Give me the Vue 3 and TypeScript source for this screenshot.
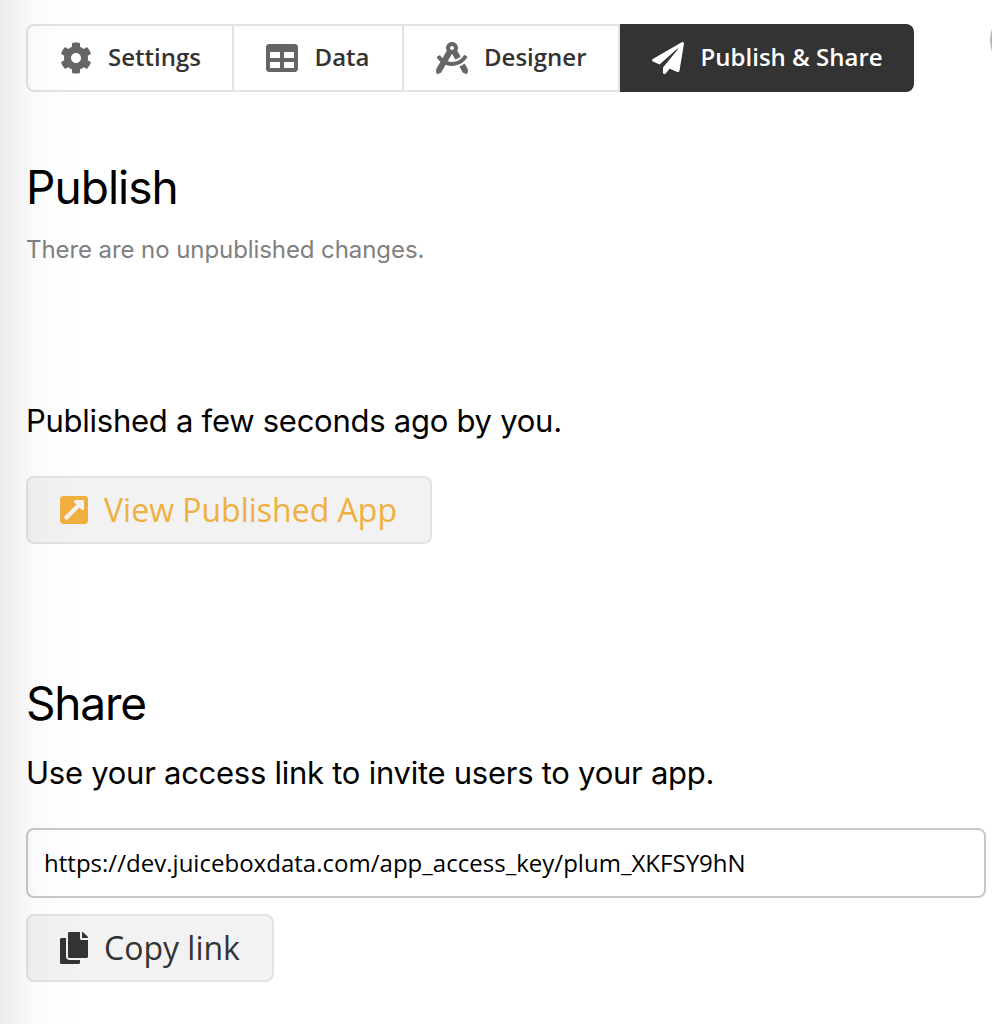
<script setup lang="ts">
interface Tab {
  id: string
  label: string
  icon: string
}

const tabs: Tab[] = [
  {
    id: 'settings',
    label: 'Settings',
    icon: 'M487.4 315.7l-42.6-24.6c4.3-23.2 4.3-47 0-70.2l42.6-24.6c4.9-2.8 7.1-8.6 5.5-14-11.1-35.6-30-67.8-54.7-94.6-3.8-4.1-10-5.1-14.8-2.3L380.8 110c-17.9-15.4-38.5-27.3-60.8-35.1V25.8c0-5.6-3.9-10.5-9.4-11.7-36.7-8.2-74.3-7.8-109.2 0-5.5 1.2-9.4 6.1-9.4 11.7V75c-22.2 7.9-42.8 19.8-60.8 35.1L88.7 85.5c-4.9-2.8-11-1.9-14.8 2.3-24.7 26.7-43.6 58.9-54.7 94.6-1.7 5.4.6 11.2 5.5 14L67.3 221c-4.3 23.2-4.3 47 0 70.2l-42.6 24.6c-4.9 2.8-7.1 8.6-5.5 14 11.1 35.6 30 67.8 54.7 94.6 3.8 4.1 10 5.1 14.8 2.3l42.6-24.6c17.9 15.4 38.5 27.3 60.8 35.1v49.2c0 5.6 3.9 10.5 9.4 11.7 36.7 8.2 74.3 7.8 109.2 0 5.5-1.2 9.4-6.1 9.4-11.7v-49.2c22.2-7.9 42.8-19.8 60.8-35.1l42.6 24.6c4.9 2.8 11 1.9 14.8-2.3 24.7-26.7 43.6-58.9 54.7-94.6 1.5-5.5-.7-11.3-5.6-14.1zM256 336c-44.1 0-80-35.9-80-80s35.9-80 80-80 80 35.9 80 80-35.9 80-80 80z',
  },
  {
    id: 'data',
    label: 'Data',
    icon: 'M464 32H48C21.49 32 0 53.49 0 80v352c0 26.51 21.49 48 48 48h416c26.51 0 48-21.49 48-48V80c0-26.51-21.49-48-48-48zM224 416H64v-96h160v96zm0-160H64v-96h160v96zm224 160H288v-96h160v96zm0-160H288v-96h160v96z',
  },
  {
    id: 'designer',
    label: 'Designer',
    icon: 'M457.01 344.42c-25.05 20.33-52.63 37.18-82.54 49.05l54.38 94.19 53.95 23.04c9.81 4.19 20.89-2.21 22.17-12.8l7.02-58.25-54.98-95.23zm42.49-94.56c4.86-7.67 1.89-17.99-6.05-22.39l-28.07-15.57c-7.48-4.15-16.61-1.46-21.26 5.72C403.01 281.15 332.25 320 256 320c-23.93 0-47.23-4.25-69.41-11.53l67.36-116.68c.7.02 1.34.21 2.04.21s1.35-.19 2.04-.21l51.09 88.5c31.23-8.96 59.56-25.75 82.61-48.92l-51.79-89.71C347.39 128.03 352 112.63 352 96c0-53.02-42.98-96-96-96s-96 42.98-96 96c0 16.63 4.61 32.03 12.05 45.66l-68.3 118.31c-12.55-11.61-23.96-24.59-33.68-39-4.79-7.1-13.97-9.62-21.38-5.33l-27.75 16.07c-7.85 4.54-10.63 14.9-5.64 22.47 15.57 23.64 34.69 44.21 55.98 62.02L0 439.66l7.02 58.25c1.28 10.59 12.36 16.99 22.17 12.8l53.95-23.04 70.8-122.63C186.13 377.28 220.62 384 256 384c99.05 0 190.88-51.01 243.5-134.14zM256 64c17.67 0 32 14.33 32 32s-14.33 32-32 32-32-14.33-32-32 14.33-32 32-32z',
  },
  {
    id: 'publish',
    label: 'Publish & Share',
    icon: 'M476 3.2L12.5 270.6c-18.1 10.4-15.8 35.6 2.2 43.2L121 358.4l287.3-253.2c5.5-4.9 13.3 2.6 8.6 8.3L176 407v80.5c0 23.6 28.5 32.9 42.5 15.8L282 426l124.6 52.2c14.2 6 30.4-2.9 33-18.2l72-432C515 7.8 493.3-6.8 476 3.2z',
  },
]

const activeTab = 'publish'
const accessLink = 'https://dev.juiceboxdata.com/app_access_key/plum_XKFSY9hN'
</script>

<template>
  <main class="page">
    <nav class="tabs">
      <button
        v-for="tab in tabs"
        :key="tab.id"
        :class="['tab', tab.id, { active: tab.id === activeTab }]"
      >
        <svg class="tab-icon" viewBox="0 0 512 512"><path :d="tab.icon" /></svg>
        <span>{{ tab.label }}</span>
      </button>
    </nav>

    <section class="publish-section">
      <h1>Publish</h1>
      <p class="status">There are no unpublished changes.</p>
      <p class="published">Published a few seconds ago by you.</p>
      <button class="action view">
        <svg viewBox="0 0 448 512">
          <path d="M448 80v352c0 26.51-21.49 48-48 48H48c-26.51 0-48-21.49-48-48V80c0-26.51 21.49-48 48-48h352c26.51 0 48 21.49 48 48zm-88 16H248.029c-21.313 0-32.08 25.861-16.971 40.971l31.984 31.987L67.515 364.485c-4.686 4.686-4.686 12.284 0 16.971l31.029 31.029c4.687 4.686 12.285 4.686 16.971 0l195.526-195.526 31.988 31.991C358.058 264.977 384 254.425 384 232V120c0-13.255-10.745-24-24-24z" />
        </svg>
        <span>View Published App</span>
      </button>
    </section>

    <section class="share-section">
      <h1 class="share-title">Share</h1>
      <p class="hint">Use your access link to invite users to your app.</p>
      <input class="link" type="text" readonly :value="accessLink" />
      <button class="action copy">
        <svg viewBox="0 0 448 512">
          <path d="M320 448v40c0 13.255-10.745 24-24 24H24c-13.255 0-24-10.745-24-24V120c0-13.255 10.745-24 24-24h72v296c0 30.879 25.121 56 56 56h168zm0-344V0H152c-13.255 0-24 10.745-24 24v368c0 13.255 10.745 24 24 24h272c13.255 0 24-10.745 24-24V128H344c-13.2 0-24-10.8-24-24zm120.971-31.029L375.029 7.029A24 24 0 0 0 358.059 0H352v96h96v-6.059a24 24 0 0 0-7.029-16.97z" />
        </svg>
        <span>Copy link</span>
      </button>
    </section>

    <div class="edge-badge"></div>
    <div class="edge-shadow"></div>
  </main>
</template>

<style>
body {
  background: #fff;
}
</style>

<style scoped>
.page {
  position: relative;
  box-sizing: border-box;
  width: 992px;
  height: 1024px;
  padding: 24px 6px 0 26px;
  overflow: hidden;
  font-family: Inter, sans-serif;
  color: #000;
}

button,
input {
  box-sizing: border-box;
  margin: 0;
  font-family: 'Open Sans', 'Noto Sans', sans-serif;
}

button {
  display: flex;
  align-items: center;
}

span {
  white-space: nowrap;
}

.tabs {
  display: flex;
  height: 68px;
}

.tab {
  height: 68px;
  padding: 0 0 0 32px;
  gap: 16px;
  border: 2px solid #e3e3e3;
  border-left-width: 0;
  background: #fff;
  color: #333;
  font-size: 24px;
  font-weight: 600;
}

.tab span {
  padding-bottom: 4px;
}

.data span,
.publish span {
  padding-left: 0.6px;
}

.tab-icon {
  flex: none;
  width: 32px;
  height: 32px;
  fill: #666;
}

.settings {
  width: 208px;
  border-left-width: 2px;
  border-radius: 8px 0 0 8px;
}

.data {
  width: 170px;
}

.designer {
  width: 216px;
}

.publish {
  width: 294px;
  border-color: #333;
  border-radius: 0 8px 8px 0;
}

.active {
  background: #333;
  color: #fff;
}

.active .tab-icon {
  fill: #fff;
}

h1,
p {
  margin: 0;
  font-weight: 400;
  white-space: nowrap;
}

h1 {
  font-size: 46px;
  line-height: 56px;
  letter-spacing: -0.95px;
}

.share-title {
  letter-spacing: -1.2px;
}

.publish-section {
  padding-top: 67px;
}

.status {
  margin-top: 19px;
  font-size: 24px;
  line-height: 32px;
  letter-spacing: -0.08px;
  color: #808080;
}

.published,
.hint {
  font-size: 31px;
  line-height: 40px;
  letter-spacing: -0.26px;
}

.published {
  margin-top: 135px;
}

.action {
  height: 68px;
  padding: 0 0 0 32px;
  gap: 16px;
  border: 2px solid #e3e3e3;
  border-radius: 8px;
  background: #f2f2f2;
  color: #333;
  font-size: 32px;
}

.action span {
  padding-bottom: 2px;
}

.action svg {
  flex: none;
  width: 28px;
  height: 32px;
  fill: currentColor;
}

.view {
  width: 406px;
  margin-top: 35px;
  color: #f0b040;
}

.share-section {
  padding-top: 131px;
}

.hint {
  margin-top: 22px;
}

.link {
  display: block;
  width: 960px;
  height: 70px;
  margin-top: 35px;
  padding: 0 16px 2px;
  border: 2px solid #c8c8c8;
  border-radius: 8px;
  outline: none;
  background: #fff;
  color: #000;
  font-size: 24px;
  letter-spacing: 0.02px;
}

.copy {
  width: 248px;
  margin-top: 16px;
}

.edge-badge {
  position: absolute;
  top: 8px;
  left: 990px;
  box-sizing: border-box;
  width: 64px;
  height: 64px;
  border-radius: 50%;
  background: #b8b8b8;
}

.edge-shadow {
  position: absolute;
  inset: 0 auto 0 0;
  width: 84px;
  background: linear-gradient(
    to right,
    rgba(0, 0, 0, 0.07),
    rgba(0, 0, 0, 0.055) 15%,
    rgba(0, 0, 0, 0.018) 40%,
    rgba(0, 0, 0, 0.006) 65%,
    transparent
  );
  pointer-events: none;
}
</style>
